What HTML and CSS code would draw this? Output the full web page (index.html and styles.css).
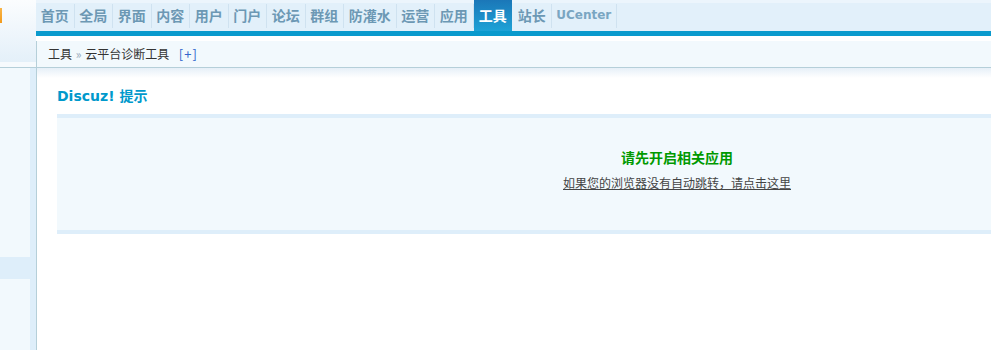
FILE: index.html
```html
<!DOCTYPE html>
<html lang="zh-CN">
<head>
    <meta charset="UTF-8">
    <title>Discuz! 管理中心 - 云平台诊断工具</title>
    <link rel="stylesheet" href="styles.css">
</head>
<body>
    <div class="page">
        <div class="side">
            <div class="side-top">
                <span class="logo-edge"></span>
            </div>
            <ul class="side-menu">
                <li></li>
                <li></li>
                <li></li>
                <li></li>
                <li></li>
                <li></li>
                <li></li>
                <li class="on"></li>
                <li></li>
            </ul>
        </div>

        <div class="main">
            <div class="topnav">
                <ul>
                    <li><a href="#">首页</a></li>
                    <li><a href="#">全局</a></li>
                    <li><a href="#">界面</a></li>
                    <li><a href="#">内容</a></li>
                    <li><a href="#">用户</a></li>
                    <li><a href="#">门户</a></li>
                    <li><a href="#">论坛</a></li>
                    <li><a href="#">群组</a></li>
                    <li><a href="#">防灌水</a></li>
                    <li><a href="#">运营</a></li>
                    <li><a href="#">应用</a></li>
                    <li class="active"><a href="#">工具</a></li>
                    <li><a href="#">站长</a></li>
                    <li class="uc"><a href="#">UCenter</a></li>
                </ul>
            </div>

            <div class="crumb">
                工具 <em>&raquo;</em> 云平台诊断工具 <a href="#" class="add">[+]</a>
            </div>

            <div class="content">
                <h3>Discuz! 提示</h3>
                <div class="infobox">
                    <h4 class="succeed">请先开启相关应用</h4>
                    <p><a href="#" class="jump">如果您的浏览器没有自动跳转，请点击这里</a></p>
                </div>
            </div>
        </div>
    </div>
</body>
</html>
```

FILE: styles.css
```css
html, body {
    margin: 0;
    padding: 0;
    height: 100%;
    overflow: hidden;
}
body {
    font: 12px "Noto Sans CJK SC", "Liberation Sans", sans-serif;
    color: #333;
    background: #fff;
}
ul {
    margin: 0;
    padding: 0;
    list-style: none;
}
a {
    text-decoration: none;
}
.page {
    display: flex;
    height: 100%;
}

/* left frame */
.side {
    width: 36px;
    flex-shrink: 0;
    display: flex;
    flex-direction: column;
}
.side-top {
    height: 68px;
    box-sizing: border-box;
    padding-top: 8px;
    border-bottom: 1px solid #b5cfd9;
    background: linear-gradient(#fbfdfe, #f1f7fc 40%, #e4f0f9 92%, #f6fafd 92%);
}
.logo-edge {
    display: block;
    width: 2px;
    height: 15px;
    background: linear-gradient(#f8b548, #f39a1c);
}
.side-menu {
    flex: 1;
    background: #f2f9fd;
    border-right: 6px solid #deeefa;
}
.side-menu li {
    height: 27px;
}
.side-menu li.on {
    height: 22px;
    background: #deeefa;
}

/* right frame */
.main {
    flex: 1;
    min-width: 0;
    overflow: hidden;
    display: flex;
    flex-direction: column;
}
.topnav {
    height: 31px;
    border-bottom: 5px solid #0a9acd;
    background: linear-gradient(#ecf5fc 0, #ecf5fc 3px, #e2f0fa 3px);
}
.topnav ul {
    display: flex;
    height: 31px;
}
.topnav li {
    padding-right: 1px;
    background: linear-gradient(#cfe2f0, #cfe2f0) right 4px / 1px 24px no-repeat;
}
.topnav li a {
    display: block;
    padding: 0 4.75px;
    line-height: 31px;
    font-size: 14px;
    font-weight: bold;
    color: #6c98b4;
}
.topnav li.active {
    background: none;
}
.topnav li.active a {
    padding: 0 5.25px;
    color: #fff;
    background: linear-gradient(#1b77b8, #1ea2d6);
}
.topnav li.uc a {
    font-family: "DejaVu Sans", sans-serif;
    font-size: 12px;
    color: #7aa6c2;
}
.crumb {
    margin-top: 5px;
    height: 26px;
    line-height: 26px;
    padding-left: 11px;
    background: #f2f9fd;
    border-left: 1px solid #b5cfd9;
    border-bottom: 1px solid #b5cfd9;
    color: #333;
    white-space: nowrap;
}
.crumb em {
    font-style: normal;
    color: #9ab;
    margin: 0 1px;
}
.crumb .add {
    margin-left: 7px;
    font-size: 13px;
    letter-spacing: 1px;
    color: #3366cc;
}
.content {
    flex: 1;
    width: 1240px;
    padding: 18px 20px 0;
    border-left: 1px solid #b5cfd9;
    background: linear-gradient(#e6f0f8, #fff 10px);
}
.content h3 {
    margin: 0 0 8px;
    line-height: 20px;
    font-family: "DejaVu Sans", "Noto Sans CJK SC", sans-serif;
    font-size: 14px;
    color: #09c;
}
.infobox {
    padding: 29px 0 37px;
    background: #f2f9fd;
    border-top: 4px solid #deeefa;
    border-bottom: 4px solid #deeefa;
    text-align: center;
}
.infobox h4 {
    margin: 0;
    line-height: 20px;
    font-size: 14px;
}
.succeed {
    color: #009900;
}
.infobox p {
    margin: 6px 0 0;
    line-height: 20px;
}
.jump {
    color: #444;
    text-decoration: underline;
}
```
